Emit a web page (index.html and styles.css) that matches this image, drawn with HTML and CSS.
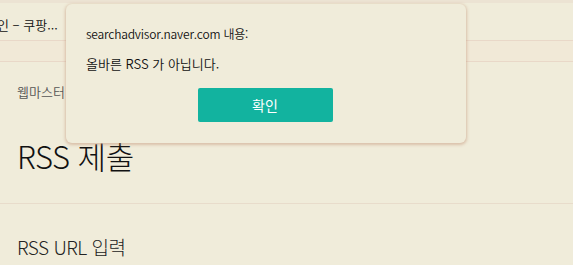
FILE: index.html
```html
<!DOCTYPE html>
<html lang="ko">
<head>
<meta charset="utf-8">
<link rel="stylesheet" href="styles.css">
</head>
<body>
<div class="topstrip"></div>
<div class="tabbar"><span class="tab-title">인 – 쿠팡...</span></div>
<div class="band"></div>
<main class="content">
  <div class="crumb">웹마스터</div>
  <h1 class="title">RSS 제출</h1>
  <div class="divider"></div>
  <h2 class="subtitle">RSS URL 입력</h2>
</main>
<div class="dialog">
  <p class="origin">searchadvisor.naver.com 내용:</p>
  <p class="message">올바른 RSS 가 아닙니다.</p>
  <div class="actions"><button class="ok">확인</button></div>
</div>
</body>
</html>
```

FILE: styles.css
```css
html, body {
  margin: 0;
  padding: 0;
  background: #f0ecda;
  font-family: "Noto Sans CJK KR", "Noto Sans", sans-serif;
  color: #111;
  width: 573px;
  height: 265px;
  overflow: hidden;
}
.topstrip {
  height: 3px;
  background: #ece3d3;
}
.tabbar {
  height: 37px;
  border-bottom: 1px solid #e9d8c8;
  display: flex;
  align-items: center;
}
.tab-title {
  font-size: 13px;
  font-weight: 350;
  margin-left: -3px;
  margin-top: 6px;
  color: #111;
}
.band {
  height: 20px;
  background: #f1e9d7;
  border-bottom: 1px solid #e9d8c8;
}
.content {
  padding-left: 17px;
}
.crumb {
  font-size: 13px;
  font-weight: 350;
  color: #555;
  margin-top: 20px;
  line-height: 20px;
}
.title {
  font-size: 31px;
  font-weight: 300;
  margin: 34px 0 0 0;
  line-height: 40px;
  color: #111;
  letter-spacing: -0.5px;
}
.divider {
  height: 1px;
  background: #e8dccb;
  margin: 27px 0 0 -17px;
}
.subtitle {
  font-size: 19px;
  font-weight: 300;
  margin: 30px 0 0 0;
  line-height: 26px;
  color: #222;
  letter-spacing: -0.5px;
}
.dialog {
  position: absolute;
  left: 66px;
  top: 4px;
  width: 400px;
  height: 139px;
  box-sizing: border-box;
  background: #f0ecda;
  border-radius: 6px;
  box-shadow: 0 1px 3px 1px rgba(190, 140, 110, 0.45);
  padding: 21px 20px 0 20px;
}
.origin {
  margin: 0;
  font-size: 12px;
  font-weight: 350;
  line-height: 18px;
  color: #111;
  letter-spacing: -0.2px;
}
.message {
  margin: 11px 0 0 0;
  font-size: 13px;
  font-weight: 350;
  line-height: 20px;
  color: #111;
}
.actions {
  display: flex;
  justify-content: center;
  margin-top: 14px;
  margin-left: -2px;
}
.ok {
  width: 135px;
  height: 34px;
  border: none;
  border-radius: 2px;
  background: #12b39f;
  color: #fff;
  font-family: "Noto Sans CJK KR", "Noto Sans", sans-serif;
  font-size: 14px;
  font-weight: 400;
  padding: 0;
}
```
